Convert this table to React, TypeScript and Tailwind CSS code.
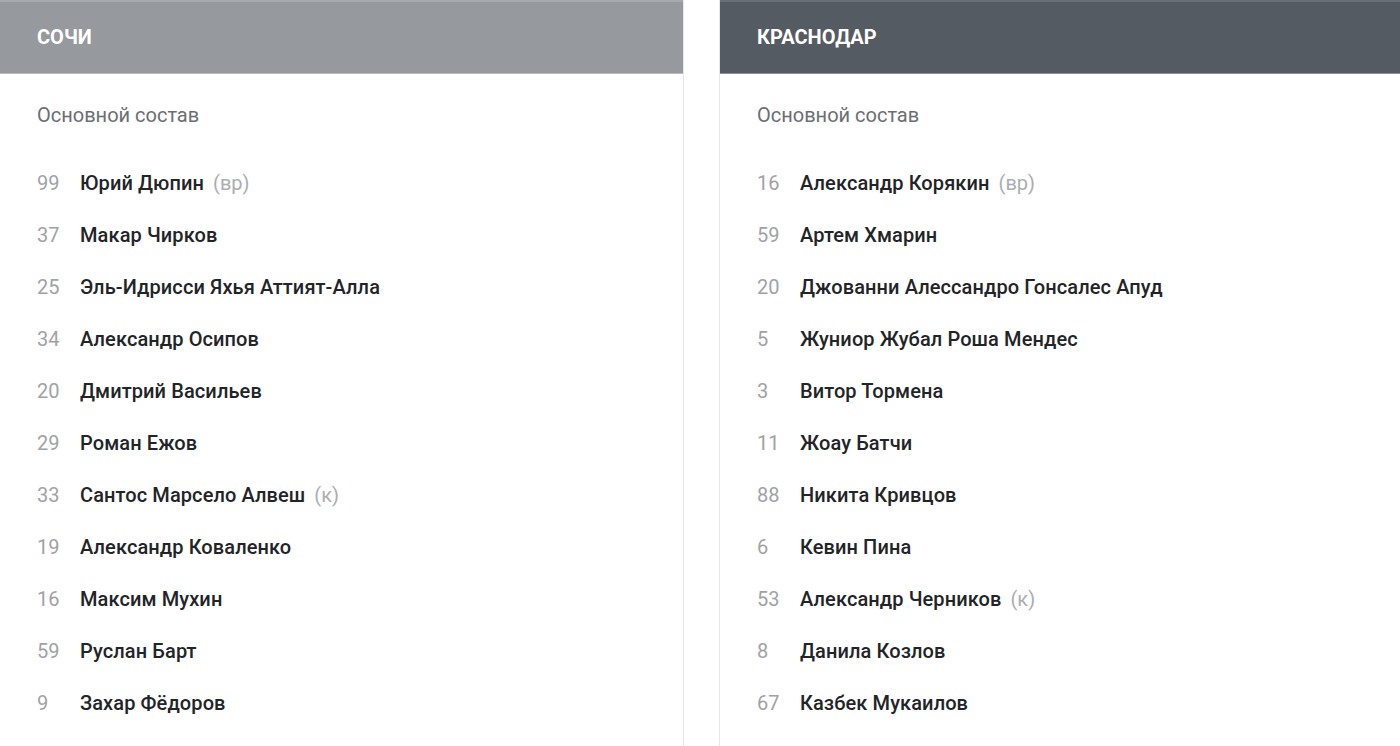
const sochi: [string, string, string?][] = [
  ["99", "Юрий Дюпин", "вр"],
  ["37", "Макар Чирков"],
  ["25", "Эль-Идрисси Яхья Аттият-Алла"],
  ["34", "Александр Осипов"],
  ["20", "Дмитрий Васильев"],
  ["29", "Роман Ежов"],
  ["33", "Сантос Марсело Алвеш", "к"],
  ["19", "Александр Коваленко"],
  ["16", "Максим Мухин"],
  ["59", "Руслан Барт"],
  ["9", "Захар Фёдоров"],
];

const krasnodar: [string, string, string?][] = [
  ["16", "Александр Корякин", "вр"],
  ["59", "Артем Хмарин"],
  ["20", "Джованни Алессандро Гонсалес Апуд"],
  ["5", "Жуниор Жубал Роша Мендес"],
  ["3", "Витор Тормена"],
  ["11", "Жоау Батчи"],
  ["88", "Никита Кривцов"],
  ["6", "Кевин Пина"],
  ["53", "Александр Черников", "к"],
  ["8", "Данила Козлов"],
  ["67", "Казбек Мукаилов"],
];

function TeamCard({ title, players, dark }: { title: string; players: [string, string, string?][]; dark?: boolean }) {
  return (
    <div className={dark ? "flex-1 border-l border-[#e6e7e9]" : "w-[684px] border-r border-[#e6e7e9]"}>
      <div
        className={
          dark
            ? "h-[74px] flex items-center pl-[37px] pb-[1px] bg-[#555b63] border-t-2 border-t-[#6a6f76] border-b border-b-[#8c9095]"
            : "h-[74px] flex items-center pl-[37px] pb-[1px] bg-[#96999e] border-t-2 border-t-[#a6a9ad] border-b border-b-[#b9bcbf]"
        }
      >
        <span className="text-white font-bold text-[20px] uppercase">{title}</span>
      </div>
      <div className="px-[37px] pt-[29px]">
        <div className="text-[20px] text-[#6b6e72] leading-[24px]">Основной состав</div>
        <ul className="mt-[30px] flex flex-col">
          {players.map(([num, name, note]) => (
            <li key={num + name} className="h-[52px] flex items-center">
              <span className="w-[43px] text-[20px] text-[#a0a2a5]">{num}</span>
              <span className="text-[20px] font-medium tracking-[0.1px] text-[#222427]">{name}</span>
              {note && <span className="ml-[9px] text-[20px] text-[#abadb0]">({note})</span>}
            </li>
          ))}
        </ul>
      </div>
    </div>
  );
}

export default function App() {
  return (
    <div className="w-[1400px] h-[746px] overflow-hidden bg-white flex gap-[35px] font-['Roboto',sans-serif]">
      <TeamCard title="Сочи" players={sochi} />
      <TeamCard title="Краснодар" players={krasnodar} dark />
    </div>
  );
}
